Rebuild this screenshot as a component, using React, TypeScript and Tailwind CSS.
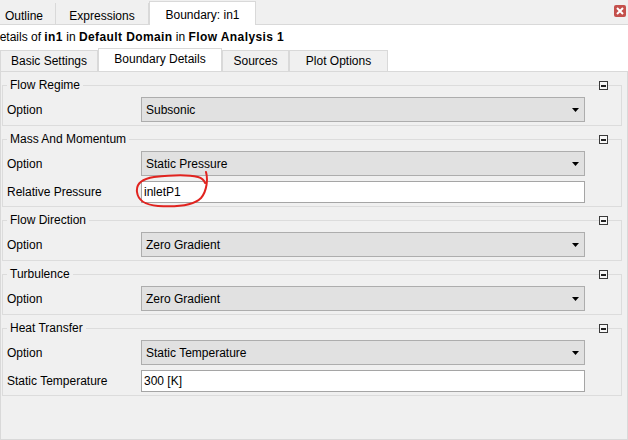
import React from 'react';

/**
 * Boundary details panel (in1)
 */

type Row = { label: string; value: string; kind: 'combo' | 'input'; marked?: boolean };

const groups: { title: string; rows: Row[] }[] = [
  { title: 'Flow Regime', rows: [{ label: 'Option', value: 'Subsonic', kind: 'combo' }] },
  {
    title: 'Mass And Momentum',
    rows: [
      { label: 'Option', value: 'Static Pressure', kind: 'combo' },
      { label: 'Relative Pressure', value: 'inletP1', kind: 'input', marked: true },
    ],
  },
  { title: 'Flow Direction', rows: [{ label: 'Option', value: 'Zero Gradient', kind: 'combo' }] },
  { title: 'Turbulence', rows: [{ label: 'Option', value: 'Zero Gradient', kind: 'combo' }] },
  {
    title: 'Heat Transfer',
    rows: [
      { label: 'Option', value: 'Static Temperature', kind: 'combo' },
      { label: 'Static Temperature', value: '300 [K]', kind: 'input' },
    ],
  },
];

function CollapseIcon() {
  return (
    <span className="absolute right-[13px] top-[-11px] flex h-[9px] w-[9px] items-center justify-center border border-[#3a3a3a] bg-[#f7f7f7]">
      <span className="h-[2px] w-[5px] bg-[#222]" />
    </span>
  );
}

function Combo({ value }: { value: string }) {
  return (
    <div className="flex h-[25px] items-center justify-between border border-[#adadad] bg-[#e1e1e1] pl-[4px] pr-[5px]">
      <span>{value}</span>
      <svg width="7" height="4" viewBox="0 0 7 4">
        <path d="M0 0h7L3.5 4z" fill="#000" />
      </svg>
    </div>
  );
}

function TextInput({ value, marked }: { value: string; marked?: boolean }) {
  return (
    <div className="relative">
      <div className="flex h-[22px] items-center border border-[#a5a5a5] bg-white pl-[2px]">{value}</div>
      {marked && (
        // red hand-drawn mark from the screenshot
        <svg
          className="pointer-events-none absolute left-[-7px] top-[-12px]"
          width="76"
          height="40"
          viewBox="0 0 76 40"
        >
          <path
            d="M72 3 C74 10 73 22 67 29 C59 37 40 38 24 37 C11 36 4 31 3 23 C2 15 7 10 20 8 C38 6 56 6 64 8 C68 9 70 11 71 14"
            fill="none"
            stroke="#e1231f"
            strokeWidth="2"
            strokeLinecap="round"
          />
        </svg>
      )}
    </div>
  );
}

function Group({ title, rows }: { title: string; rows: Row[] }) {
  return (
    <fieldset className="relative border border-[#dcdcdc] pb-[3px] pl-[4px] pr-[36px]">
      <legend className="px-[3px] leading-[14px]">{title}</legend>
      <div className="mt-[5px] grid grid-cols-[134px_1fr] items-center gap-y-[5px]">
        {rows.map((row, i) => (
          <React.Fragment key={i}>
            <span>{row.label}</span>
            {row.kind === 'combo' ? <Combo value={row.value} /> : <TextInput value={row.value} marked={row.marked} />}
          </React.Fragment>
        ))}
      </div>
      <CollapseIcon />
    </fieldset>
  );
}

export default function App() {
  const subTabs = [
    { name: 'Basic Settings', w: 'w-[98px]' },
    { name: 'Boundary Details', w: 'w-[124px]', active: true },
    { name: 'Sources', w: 'w-[67px]' },
    { name: 'Plot Options', w: 'w-[99px]' },
  ];

  return (
    <div className="flex h-[440px] w-[628px] flex-col overflow-hidden bg-white font-['Liberation_Sans',Arial,sans-serif] text-[12px] text-black">
      {/* top tab bar */}
      <div className="flex h-[25px] shrink-0 items-end border-b border-[#d9d9d9] bg-[#f0f0f0]">
        <div className="flex h-[21px] w-[56px] items-center border-r border-[#d9d9d9] pl-[5px] pt-[4px]">Outline</div>
        <div className="flex h-[21px] w-[93px] items-center justify-center border-r border-[#d9d9d9] pt-[4px]">Expressions</div>
        <div className="-mb-px flex h-[24px] w-[107px] items-center justify-center border-x border-t border-[#d9d9d9] bg-white pt-[2px]">
          Boundary: in1
        </div>
        <div className="mb-[7px] ml-auto mr-[2px] flex h-[12px] w-[12px] items-center justify-center rounded-[2px] bg-[#c4504c]">
          <svg width="8" height="8" viewBox="0 0 8 8">
            <path d="M1 1L7 7M7 1L1 7" stroke="#fff" strokeWidth="2" />
          </svg>
        </div>
      </div>

      {/* details line */}
      <div className="flex h-[23px] shrink-0 items-center overflow-hidden">
        <span className="-ml-[9px] whitespace-nowrap">
          Details of <b className="tracking-[0.4px]">in1</b> in <b className="tracking-[0.4px]">Default Domain</b> in{' '}
          <b className="tracking-[0.4px]">Flow Analysis 1</b>
        </span>
      </div>

      {/* sub tabs */}
      <div className="flex h-[23px] shrink-0 items-end">
        {subTabs.map((t) =>
          t.active ? (
            <div key={t.name} className={`flex h-[23px] items-center justify-center border-x border-t border-[#d9d9d9] bg-white pb-[3px] ${t.w}`}>
              {t.name}
            </div>
          ) : (
            <div key={t.name} className={`flex h-[21px] items-center justify-center border-x border-t border-[#d9d9d9] bg-[#f0f0f0] ${t.w}`}>
              {t.name}
            </div>
          )
        )}
      </div>

      {/* content */}
      <div className="flex flex-1 flex-col gap-[6px] border border-[#d9d9d9] bg-[#f0f0f0] pl-[1px] pr-[5px] pt-[6px]">
        {groups.map((g) => (
          <Group key={g.title} title={g.title} rows={g.rows} />
        ))}
      </div>
    </div>
  );
}
